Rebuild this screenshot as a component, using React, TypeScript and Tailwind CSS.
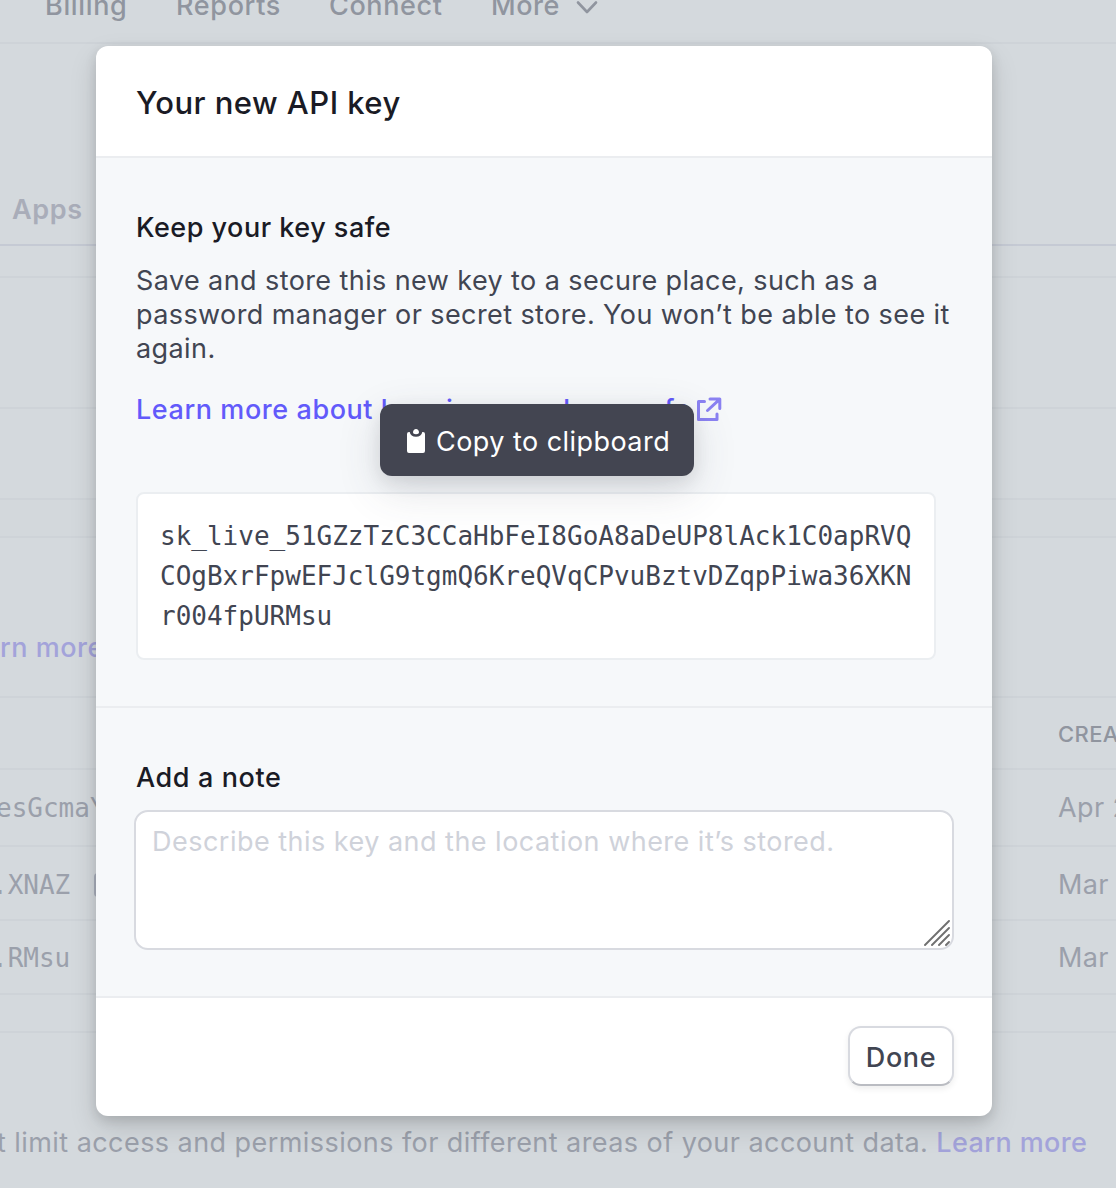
import React from "react";

const apiKey = [
  "sk_live_51GZzTzC3CCaHbFeI8GoA8aDeUP8lAck1C0apRVQ",
  "COgBxrFpwEFJclG9tgmQ6KreQVqCPvuBztvDZqpPiwa36XKN",
  "r004fpURMsu",
];

function Page() {
  return (
    <div className="h-[1188px] w-full overflow-hidden whitespace-nowrap bg-[#d4d9dd] text-[27px] leading-[34px] text-[#9ba0ab]">
      <nav className="flex h-[44px] items-start border-b-2 border-[#ced3d8] pl-[45px] font-medium text-[#90959f]">
        <span className="-mt-[11px] w-[131px] tracking-[0.65px]">Billing</span>
        <span className="-mt-[11px] w-[153px] tracking-[0.65px]">Reports</span>
        <span className="-mt-[11px] w-[162px] tracking-[0.6px]">Connect</span>
        <span className="-mt-[11px] w-[84px] tracking-[0.5px]">More</span>
        <svg width="24" height="16" viewBox="0 0 24 16" fill="none" stroke="currentColor" strokeWidth="2.6" strokeLinecap="round" strokeLinejoin="round">
          <path d="M3 2.500 12 12l9-9.500" />
        </svg>
      </nav>
      <div className="flex h-[202px] items-end border-b-2 border-[#c5cad4] pb-[17px] pl-[12px] font-semibold text-[#a9adb9]">
        <span className="tracking-[0.6px]">Apps</span>
      </div>
      <div className="h-[32px] border-b-2 border-[#ced3d8]" />
      <div className="h-[131px] border-b-2 border-[#ced3d8]" />
      <div className="h-[91px] border-b-2 border-[#ced3d8]" />
      <div className="h-[38px] border-b-2 border-[#ced3d8] bg-[#d3d8dc]" />
      <div className="flex h-[160px] items-end border-b-2 border-[#ced3d8] pb-[31px] font-medium text-[#a3a3da]">
        <span className="tracking-[0.5px]">rn more</span>
      </div>
      <div className="flex h-[72px] items-center border-b-2 border-[#ced3d8] pl-[1058px] pt-[2px] text-[22px] font-medium text-[#90959f]">
        <span className="tracking-[0.4px]">CREATED</span>
      </div>
      <div className="flex h-[77px] items-center border-b-2 border-[#ced3d8]">
        <span className="-ml-[4px] w-[1062px] shrink-0 font-['DejaVu_Sans_Mono',monospace] text-[26px]">esGcmaY</span>
        <span className="tracking-[0.4px]">Apr 22</span>
      </div>
      <div className="flex h-[74px] items-center border-b-2 border-[#ced3d8] pt-[3px]">
        <span className="-ml-[8px] w-[102px] shrink-0 font-['DejaVu_Sans_Mono',monospace] text-[26px]">.XNAZ</span>
        <span className="mr-[924px] h-[24px] w-[40px] shrink-0 rounded bg-[#a9afbc]" />
        <span className="tracking-[0.3px]">Mar 30</span>
      </div>
      <div className="flex h-[74px] items-center border-b-2 border-[#ced3d8] pt-[2px]">
        <span className="-ml-[8px] w-[1066px] shrink-0 font-['DejaVu_Sans_Mono',monospace] text-[26px]">.RMsu</span>
        <span className="tracking-[0.3px]">Mar 30</span>
      </div>
      <div className="h-[38px] border-b-2 border-[#ced3d8]" />
      <p className="mt-[93px] -ml-[3px]">
        <span className="tracking-[0.440px]">t limit access and permissions for different areas of your account data. </span>
        <span className="font-medium tracking-[0.4px] text-[#a3a3da]">Learn more</span>
      </p>
    </div>
  );
}

function ExternalIcon() {
  return (
    <svg className="ml-auto" width="26" height="26" viewBox="0 0 26 26" fill="none" stroke="#8b82f2" strokeWidth="3" strokeLinejoin="round">
      <path d="M8.500 4.500H2.500v18h18.500V17" strokeLinecap="round" />
      <path d="M14 2h9.800v9.500M23 2.800 11.500 13.500" strokeLinecap="round" />
    </svg>
  );
}

function Tooltip() {
  return (
    <div className="absolute left-[284px] top-[358px] flex h-[72px] w-[314px] items-center whitespace-nowrap rounded-[12px] bg-[#434551] pl-[27px] text-[27px] text-white shadow-[0_14px_44px_rgba(60,66,87,0.16),0_6px_18px_rgba(0,0,0,0.09)]">
      <svg className="mt-[1px]" width="18" height="24" viewBox="0 0 18 24" fill="white">
        <path d="M2 3h.7C3.2 6 5.5 7.7 9 7.7S14.8 6 15.3 3h.7a2 2 0 0 1 2 2v17a2 2 0 0 1-2 2H2a2 2 0 0 1-2-2V5a2 2 0 0 1 2-2Z" />
        <path d="M6 3.2C6 1.3 7.3 0 9 0s3 1.300 3 3.200C12 4.500 11 5.200 9 5.200S6 4.500 6 3.200Z" />
      </svg>
      <span className="ml-[11px] mt-[5px] tracking-[0.45px]">Copy to clipboard</span>
    </div>
  );
}

function Dialog() {
  return (
    <div className="absolute left-[96px] top-[46px] h-[1070px] w-[896px] rounded-[12px] bg-white shadow-[0_12px_28px_rgba(0,0,0,0.13),0_4px_12px_rgba(0,0,0,0.12)]">
      <header className="flex h-[112px] items-center border-b-2 border-[#ebedf0] pl-[40px] pt-[4px]">
        <h1 className="text-[31px] font-medium tracking-[0.45px] text-[#1a1b25]">Your new API key</h1>
      </header>
      <section className="h-[550px] whitespace-nowrap border-b-2 border-[#ebedf0] bg-[#f6f8fa] pl-[40px] pt-[53px] text-[27px] leading-[34px] text-[#414552]">
        <h2 className="font-medium tracking-[0.5px] text-[#1a1b25]">Keep your key safe</h2>
        <p className="mt-[19px] tracking-[0.41px]">
          Save and store this new key to a secure place, such as a<br />
          password manager or secret store. You won’t be able to see it<br />
          again.
        </p>
        <div className="mt-[27px] flex w-[586px] items-center font-medium text-[#625afa]">
          <span className="tracking-[0.570px]">Learn more about keeping your keys safe</span>
          <ExternalIcon />
        </div>
        <div className="mt-[65px] h-[168px] w-[800px] rounded-[8px] border-2 border-[#ebeef1] bg-white pl-[22px] pt-[22px] font-['DejaVu_Sans_Mono',monospace] text-[26px] leading-[40px]">
          {apiKey.map((line) => (
            <div key={line}>{line}</div>
          ))}
        </div>
      </section>
      <section className="h-[290px] border-b-2 border-[#ebedf0] bg-[#f6f8fa] pl-[38px] pt-[53px] text-[27px] leading-[34px]">
        <h2 className="pl-[2px] font-medium tracking-[0.6px] text-[#1a1b25]">Add a note</h2>
        <div className="relative mt-[15px] h-[140px] w-[820px] rounded-[14px] border-2 border-[#d8dae0] bg-white">
          <textarea
            className="block h-full w-full resize-none rounded-[12px] bg-transparent px-[16px] py-[13px] tracking-[0.48px] outline-none placeholder:text-[#cfd2da]"
            placeholder="Describe this key and the location where it’s stored."
          />
          <svg className="absolute bottom-[2px] right-[2px]" width="26" height="26" viewBox="0 0 26 26" stroke="#707070" strokeWidth="1.9" strokeLinecap="round">
            <path d="M1 25 25 1M8 25 25 8M15 25 25 15M22 25l3-3" />
          </svg>
        </div>
      </section>
      <footer className="flex justify-end pr-[38px] pt-[28px]">
        <button className="h-[60px] w-[106px] rounded-[13px] border-2 border-[#d8dae0] border-b-[#babcc2] bg-white pt-[5px] text-[27px] font-medium tracking-[0.6px] text-[#414552] shadow-[0_3px_6px_rgba(0,0,0,0.07)]">
          Done
        </button>
      </footer>
      <Tooltip />
    </div>
  );
}

export default function App() {
  return (
    <main className="relative h-[1188px] w-[1116px] overflow-hidden font-['Inter',sans-serif]">
      <Page />
      <Dialog />
    </main>
  );
}
